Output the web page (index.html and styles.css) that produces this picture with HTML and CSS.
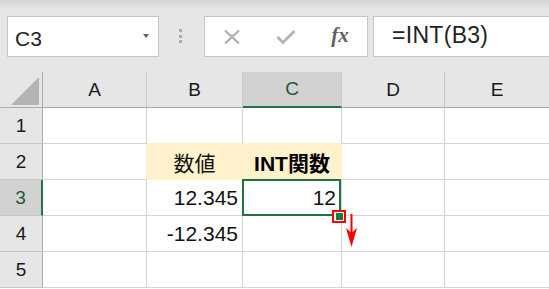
FILE: index.html
```html
<!DOCTYPE html>
<html lang="ja">
<head>
<meta charset="utf-8">
<title>INT関数</title>
<link rel="stylesheet" href="styles.css">
</head>
<body>
<div class="toolbar">
  <div class="namebox"><span class="name">C3</span><span class="caret"></span></div>
  <div class="grip"><i></i><i></i><i></i></div>
  <div class="fbtns">
    <span class="fbtn"><svg width="18" height="16" viewBox="0 0 18 16"><path d="M2 1.5 L16 14.5 M16 1.5 L2 14.5" stroke="#ababab" stroke-width="2" fill="none"/></svg></span>
    <span class="fbtn"><svg width="20" height="16" viewBox="0 0 20 16"><path d="M1.5 8 L7 13.5 L18.5 2" stroke="#b5b5b5" stroke-width="3" fill="none"/></svg></span>
    <span class="fbtn fx">fx</span>
  </div>
  <div class="formula">=INT(B3)</div>
</div>
<div class="sheet">
  <div class="corner"><svg width="28" height="28" viewBox="0 0 28 28"><polygon points="0,28 28,0 28,28" fill="#b4b4b4"/></svg></div>
  <div class="ch">A</div>
  <div class="ch">B</div>
  <div class="ch ch-sel">C</div>
  <div class="ch">D</div>
  <div class="ch">E</div>

  <div class="rh">1</div>
  <div class="c"></div>
  <div class="c c-above"></div>
  <div class="c c-above"></div>
  <div class="c"></div>
  <div class="c"></div>

  <div class="rh">2</div>
  <div class="c c-left"></div>
  <div class="c fill center">数値</div>
  <div class="c fill center bold">INT関数</div>
  <div class="c"></div>
  <div class="c"></div>

  <div class="rh rh-sel">3</div>
  <div class="c"></div>
  <div class="c num">12.345</div>
  <div class="c num active">12
    <span class="sel"></span>
    <span class="hbox"><span class="handle"></span></span>
    <svg class="arrow" width="14" height="36" viewBox="0 0 14 36"><rect x="5.5" y="1" width="2" height="19" fill="#ff0000"/><polygon points="1,15 6.5,20 12,15 6.5,34" fill="#ff0000"/></svg>
  </div>
  <div class="c"></div>
  <div class="c"></div>

  <div class="rh">4</div>
  <div class="c"></div>
  <div class="c num">-12.345</div>
  <div class="c"></div>
  <div class="c"></div>
  <div class="c"></div>

  <div class="rh">5</div>
  <div class="c"></div>
  <div class="c"></div>
  <div class="c"></div>
  <div class="c"></div>
  <div class="c"></div>
</div>
</body>
</html>
```
FILE: styles.css
```css
* { box-sizing: border-box; }
html, body { margin: 0; padding: 0; }
body {
  width: 549px;
  height: 289px;
  overflow: hidden;
  background: #ffffff;
  font-family: "Liberation Sans", "Noto Sans CJK JP", sans-serif;
  color: #111;
}
.toolbar {
  height: 72px;
  display: flex;
  align-items: flex-start;
  padding-top: 16px;
  background: linear-gradient(#d3d3d3 0px, #e6e6e6 9px, #e6e6e6 100%);
}
.namebox {
  margin-left: 7px;
  width: 152px;
  height: 41px;
  border: 1px solid #c6c6c6;
  background: #fff;
  display: flex;
  align-items: center;
  justify-content: space-between;
  padding: 4px 9px 0 7px;
}
.name { font-size: 21px; line-height: 24px; color: #222; }
.caret {
  width: 0; height: 0;
  border-left: 3.5px solid transparent;
  border-right: 3.5px solid transparent;
  border-top: 4px solid #606060;
  margin-top: -5px;
}
.grip {
  width: 45px;
  height: 41px;
  display: flex;
  flex-direction: column;
  align-items: center;
  padding-top: 13px;
  padding-right: 2px;
  gap: 2.7px;
}
.grip i { display: block; width: 3px; height: 3px; background: #acacac; }
.fbtns {
  width: 164px;
  height: 41px;
  border: 1px solid #c6c6c6;
  background: #fff;
  display: flex;
}
.fbtn {
  flex: 1;
  display: flex;
  align-items: center;
  justify-content: center;
}
.fbtn.fx {
  font-family: "Liberation Serif", serif;
  font-style: italic;
  font-weight: bold;
  font-size: 21px;
  color: #5f5f5f;
  padding-bottom: 3px;
}
.formula {
  flex: 1;
  margin-left: 5px;
  margin-right: -4px;
  height: 41px;
  border: 1px solid #c6c6c6;
  background: #fff;
  padding: 0 0 3px 18px;
  display: flex;
  align-items: center;
  font-size: 23px;
  color: #222;
  letter-spacing: 0.3px;
}
.sheet {
  display: grid;
  grid-template-columns: 43px 104px 96px 99px 103px 105px;
  grid-auto-rows: 36px;
  width: 550px;
}
.corner {
  background: #e6e6e6;
  border-right: 1px solid #ababab;
  border-bottom: 1px solid #ababab;
  padding: 5px 0 0 11px;
}
.corner svg { display: block; }
.ch {
  background: #e6e6e6;
  border-right: 1px solid #c8c8c8;
  border-bottom: 1px solid #ababab;
  display: flex;
  align-items: center;
  justify-content: center;
  font-size: 19px;
  color: #1a1a1a;
}
.ch-sel {
  background: #d2d2d2;
  border-bottom: 2px solid #217346;
  color: #1d5a38;
}
.rh {
  background: #e6e6e6;
  border-right: 1px solid #ababab;
  border-bottom: 1px solid #c8c8c8;
  display: flex;
  align-items: center;
  justify-content: center;
  font-size: 19px;
  color: #1a1a1a;
}
.rh-sel {
  background: #d2d2d2;
  border-right: 2px solid #217346;
  color: #1d5a38;
}
.c {
  border-right: 1px solid #d4d4d4;
  border-bottom: 1px solid #d4d4d4;
  display: flex;
  align-items: center;
  font-size: 21px;
  color: #111;
}
.c-above { border-bottom-color: #fff2cc; }
.c-left { border-right-color: #fff2cc; }
.fill { background: #fff2cc; border-color: #fff2cc; }
.center { justify-content: center; }
.bold { font-weight: bold; color: #000; }
.num { justify-content: flex-end; padding-right: 4px; }
.active { position: relative; padding-right: 5px; }
.sel {
  position: absolute;
  top: -1px; left: -1px; right: 0; bottom: -1px;
  border: 2px solid #217346;
}
.hbox {
  position: absolute;
  left: 89px; top: 30px;
  width: 14px; height: 13px;
  border: 2px solid #ff0000;
  background: #fff;
  display: flex;
  align-items: center;
  justify-content: center;
}
.handle { display: block; width: 7px; height: 7px; background: #217346; }
.arrow { position: absolute; left: 102px; top: 33px; }
```
